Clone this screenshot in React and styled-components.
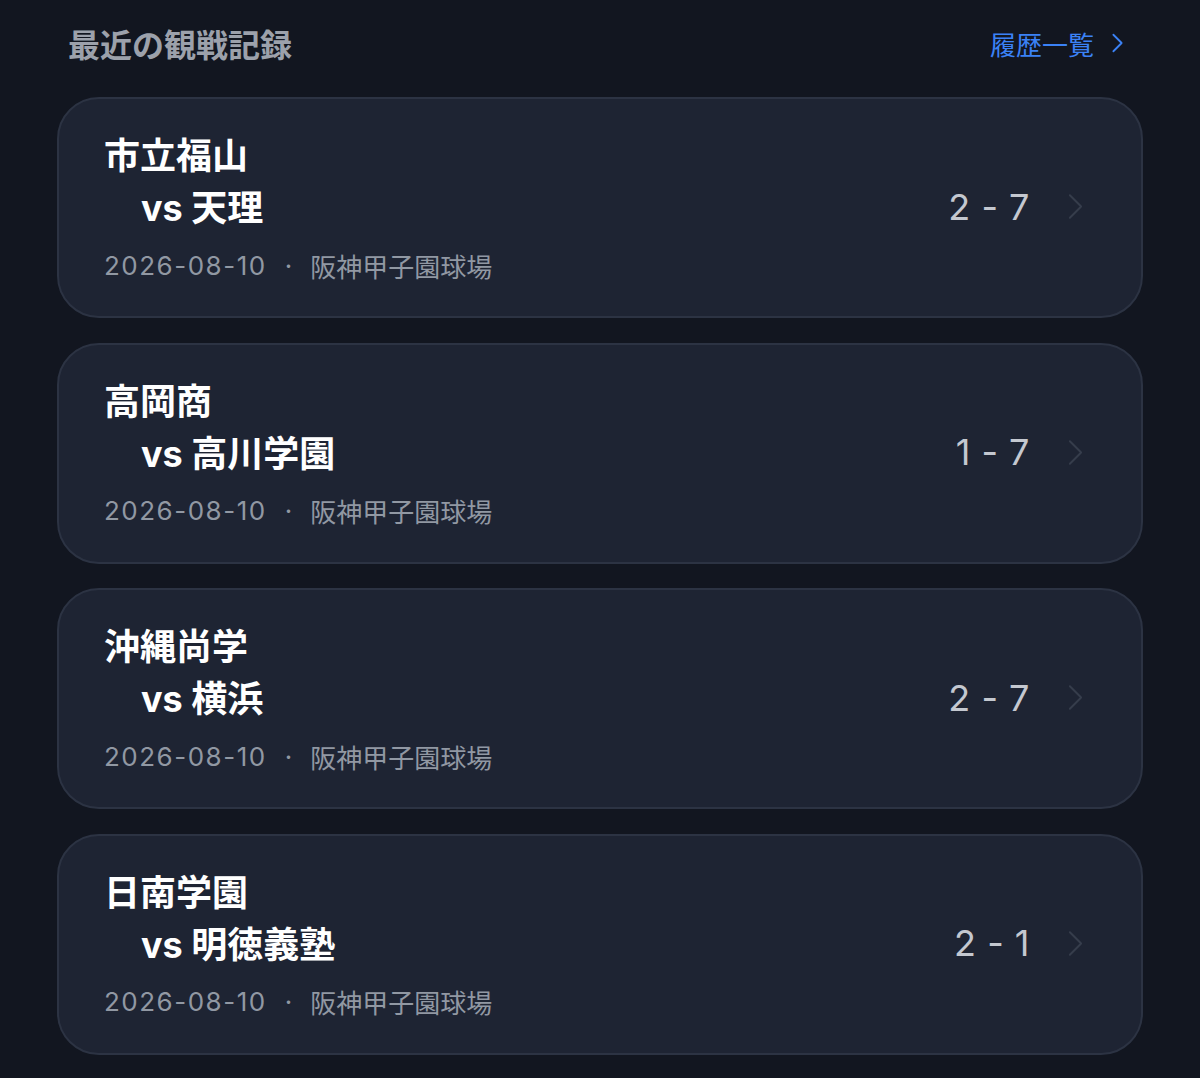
import React from "react";
import styled, { createGlobalStyle } from "styled-components";

const Global = createGlobalStyle`
  html, body { margin: 0; padding: 0; background: #121620; }
  body { font-family: Inter, "Noto Sans CJK JP", sans-serif; }
`;

const Page = styled.div`
  width: 1200px;
  height: 1078px;
  box-sizing: border-box;
  padding: 16px 57px 0;
  background: #121620;
  overflow: hidden;
`;

const Header = styled.div`
  display: flex;
  align-items: center;
  justify-content: space-between;
  padding: 0 20px 0 11px;
  height: 54px;
  margin-bottom: 27px;
`;

const Title = styled.h2`
  margin: 0;
  font-size: 32px;
  font-weight: 700;
  color: #9ca1ab;
  font-family: "Noto Sans CJK JP", sans-serif;
`;

const Link = styled.a`
  display: flex;
  align-items: center;
  gap: 18px;
  font-size: 26px;
  color: #3b82f6;
  font-family: "Noto Sans CJK JP", sans-serif;
  text-decoration: none;
`;

const List = styled.div`
  display: flex;
  flex-direction: column;
  gap: 24.5px;
`;

const Card = styled.div`
  display: flex;
  align-items: center;
  justify-content: space-between;
  box-sizing: border-box;
  height: 221px;
  padding: 30px 58px 32px 45px;
  background: #1e2433;
  border: 2px solid #2c3343;
  border-radius: 42px;
`;

const Info = styled.div`
  display: flex;
  flex-direction: column;
`;

const Team = styled.div`
  font-size: 36px;
  line-height: 52px;
  font-weight: 700;
  color: #ffffff;
  padding-left: ${(p) => (p.$indent ? "37px" : "0")};
  font-family: Inter, "Noto Sans CJK JP", sans-serif;
  white-space: nowrap;
`;

const Meta = styled.div`
  display: flex;
  align-items: center;
  margin-top: 13px;
  height: 36px;
  font-size: 26px;
  color: #9198a3;
  font-family: Inter, "Noto Sans CJK JP", sans-serif;
  white-space: nowrap;
`;

const DateText = styled.span`
  letter-spacing: 1.5px;
`;

const Dot = styled.span`
  margin: 0 18px 0 18px;
`;

const Right = styled.div`
  display: flex;
  align-items: center;
  gap: 38px;
`;

const Score = styled.div`
  font-size: 36px;
  font-weight: 400;
  color: #c4c8d0;
  letter-spacing: 0.5px;
  white-space: nowrap;
`;

const Chevron = ({ color, w, h, sw }) => (
  <svg width={w} height={h} viewBox="0 0 16 28" fill="none">
    <path d="M2 2 L14 14 L2 26" stroke={color} strokeWidth={sw} strokeLinecap="round" strokeLinejoin="round" />
  </svg>
);

const games = [
  { home: "市立福山", away: "天理", score: "2 - 7" },
  { home: "高岡商", away: "高川学園", score: "1 - 7" },
  { home: "沖縄尚学", away: "横浜", score: "2 - 7" },
  { home: "日南学園", away: "明徳義塾", score: "2 - 1" },
];

export default function App() {
  return (
    <Page>
      <Global />
      <Header>
        <Title>最近の観戦記録</Title>
        <Link href="#">
          履歴一覧
          <Chevron color="#3b82f6" w={11} h={20} sw={2.6} />
        </Link>
      </Header>
      <List>
        {games.map((g, i) => (
          <Card key={i}>
            <Info>
              <Team>{g.home}</Team>
              <Team $indent>vs {g.away}</Team>
              <Meta>
                <DateText>2026-08-10</DateText>
                <Dot>·</Dot>阪神甲子園球場
              </Meta>
            </Info>
            <Right>
              <Score>{g.score}</Score>
              <Chevron color="#363d4c" w={15} h={27} sw={2} />
            </Right>
          </Card>
        ))}
      </List>
    </Page>
  );
}
